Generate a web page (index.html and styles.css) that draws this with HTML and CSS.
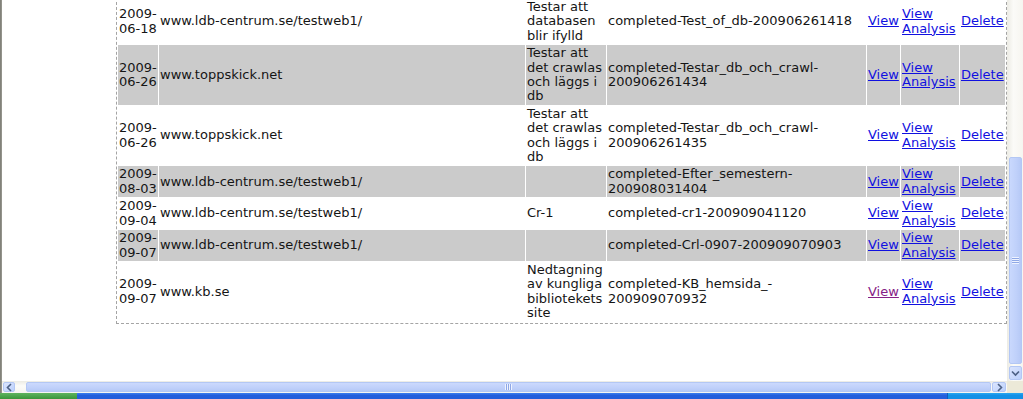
FILE: index.html
```html
<!DOCTYPE html>
<html lang="sv">
<head>
<meta charset="utf-8">
<title>Crawl jobs</title>
<link rel="stylesheet" href="styles.css">
</head>
<body>
<div class="screen">
  <div class="frame-left"></div>
  <div class="viewport">
    <div class="box">
      <table class="jobs">
        <colgroup>
          <col class="c-date"><col class="c-url"><col class="c-comment"><col class="c-file"><col class="c-view"><col class="c-analysis"><col class="c-delete">
        </colgroup>
        <tbody>
          <tr>
            <td>2009-<wbr>06-18</td><td>www.ldb-centrum.se/testweb1/</td><td>Testar att databasen blir ifylld</td><td>completed-Test_of_db-200906261418</td>
            <td><a href="#v1">View</a></td><td><a href="#a1">View Analysis</a></td><td><a href="#d1">Delete</a></td>
          </tr>
          <tr class="shade">
            <td>2009-<wbr>06-26</td><td>www.toppskick.net</td><td>Testar att det crawlas och läggs i db</td><td>completed-Testar_db_och_crawl-<wbr>200906261434</td>
            <td><a href="#v2">View</a></td><td><a href="#a2">View Analysis</a></td><td><a href="#d2">Delete</a></td>
          </tr>
          <tr>
            <td>2009-<wbr>06-26</td><td>www.toppskick.net</td><td>Testar att det crawlas och läggs i db</td><td>completed-Testar_db_och_crawl-<wbr>200906261435</td>
            <td><a href="#v3">View</a></td><td><a href="#a3">View Analysis</a></td><td><a href="#d3">Delete</a></td>
          </tr>
          <tr class="shade">
            <td>2009-<wbr>08-03</td><td>www.ldb-centrum.se/testweb1/</td><td></td><td>completed-Efter_semestern-<wbr>200908031404</td>
            <td><a href="#v4">View</a></td><td><a href="#a4">View Analysis</a></td><td><a href="#d4">Delete</a></td>
          </tr>
          <tr>
            <td>2009-<wbr>09-04</td><td>www.ldb-centrum.se/testweb1/</td><td>Cr-1</td><td>completed-cr1-200909041120</td>
            <td><a href="#v5">View</a></td><td><a href="#a5">View Analysis</a></td><td><a href="#d5">Delete</a></td>
          </tr>
          <tr class="shade">
            <td>2009-<wbr>09-07</td><td>www.ldb-centrum.se/testweb1/</td><td></td><td>completed-Crl-0907-200909070903</td>
            <td><a href="#v6">View</a></td><td><a href="#a6">View Analysis</a></td><td><a href="#d6">Delete</a></td>
          </tr>
          <tr>
            <td>2009-<wbr>09-07</td><td>www.kb.se</td><td>Nedtagning av kungliga bibliotekets site</td><td>completed-KB_hemsida_-<wbr>200909070932</td>
            <td><a class="visited" href="#v7">View</a></td><td><a href="#a7">View Analysis</a></td><td><a href="#d7">Delete</a></td>
          </tr>
        </tbody>
      </table>
    </div>
  </div>
  <div class="vscroll">
    <div class="vtrack">
      <div class="vthumb"><span class="grip-h"></span></div>
    </div>
    <div class="sbtn vbtn">
      <svg width="9" height="7" viewBox="0 0 9 7"><path d="M1 1.5 L4.5 5 L8 1.5" fill="none" stroke="#4d6185" stroke-width="1.6"/></svg>
    </div>
  </div>
  <div class="hscroll">
    <div class="sbtn hbtn-left">
      <svg width="7" height="9" viewBox="0 0 7 9"><path d="M5 1 L1.5 4.5 L5 8" fill="none" stroke="#4d6185" stroke-width="1.6"/></svg>
    </div>
    <div class="htrack">
      <div class="hthumb"><span class="grip-v"></span></div>
    </div>
    <div class="sbtn hbtn-right">
      <svg width="7" height="9" viewBox="0 0 7 9"><path d="M2 1 L5.5 4.5 L2 8" fill="none" stroke="#4d6185" stroke-width="1.6"/></svg>
    </div>
  </div>
  <div class="corner"></div>
  <div class="taskbar">
    <div class="start"></div>
    <div class="bar"></div>
    <div class="tray"></div>
  </div>
</div>
</body>
</html>
```

FILE: styles.css
```css
html, body {
  margin: 0;
  padding: 0;
  background: #ffffff;
  overflow: hidden;
}

.screen {
  width: 1023px;
  height: 399px;
  display: grid;
  grid-template-columns: 2px 1005px 16px;
  grid-template-rows: 381px 12px 6px;
}

.frame-left {
  grid-column: 1;
  grid-row: 1 / span 2;
  background: linear-gradient(to right, #7a7a72, #9b9b93);
}

.viewport {
  grid-column: 2;
  grid-row: 1;
  background: #ffffff;
  overflow: hidden;
  font-family: "DejaVu Sans", Verdana, sans-serif;
  font-size: 13px;
  color: #151515;
}

.box {
  margin: -3px 0 0 114px;
  width: 891px;
  box-sizing: border-box;
  border: 1px dashed #a4a4a4;
}

.jobs {
  width: 100%;
  table-layout: fixed;
  border-collapse: separate;
  border-spacing: 1px;
}

.c-date { width: 40px; }
.c-url { width: 366px; }
.c-comment { width: 80px; }
.c-file { width: 259px; }
.c-view { width: 33px; }
.c-analysis { width: 58px; }
.c-delete { width: 45px; }

.jobs td {
  padding: 1px;
  line-height: 14.4px;
  vertical-align: middle;
  text-align: left;
  overflow: hidden;
}

.jobs tr.shade td {
  background: #cbcbcb;
}

.jobs a {
  color: #1010e0;
  text-decoration: underline;
}

.jobs a.visited {
  color: #862086;
}

/* vertical scrollbar */
.vscroll {
  grid-column: 3;
  grid-row: 1;
  display: flex;
  flex-direction: column;
  background: linear-gradient(to right, #ecebe4, #fbfbf8 40%, #f6f5f0);
}

.vtrack {
  flex: 1;
  padding: 157px 1px 0 2px;
  box-sizing: border-box;
}

.vthumb {
  height: 207px;
  box-sizing: border-box;
  border: 1px solid #b3c7f4;
  border-radius: 2px;
  background: linear-gradient(to right, #c9d8fd, #bfd0fa 60%, #b6c9f6);
  display: flex;
  align-items: center;
  justify-content: center;
}

.grip-h {
  width: 7px;
  height: 7px;
  background: repeating-linear-gradient(to bottom, #eef3ff 0 1px, #8fa8e6 1px 2px);
}

.sbtn {
  box-sizing: border-box;
  border: 1px solid #b3c7f4;
  border-radius: 2px;
  background: linear-gradient(to bottom right, #dbe5fe, #bcd0fb);
  display: flex;
  align-items: center;
  justify-content: center;
}

.vbtn {
  height: 14px;
  margin: 1px 1px 1px 2px;
}

/* horizontal scrollbar */
.hscroll {
  grid-column: 2;
  grid-row: 2;
  display: flex;
  align-items: stretch;
  padding: 0 1px 0 1px;
  background: linear-gradient(to bottom, #ecebe4, #fbfbf8 40%, #f6f5f0);
}

.hbtn-left {
  width: 12px;
  margin: 1px 0;
}

.hbtn-right {
  width: 14px;
  margin: 1px 0;
}

.htrack {
  flex: 1;
  padding: 1px 1px 1px 11px;
  display: flex;
}

.hthumb {
  flex: 1;
  box-sizing: border-box;
  border: 1px solid #b3c7f4;
  border-radius: 2px;
  background: linear-gradient(to bottom, #cbd9fd, #bfd0fa 60%, #b6c9f6);
  display: flex;
  align-items: center;
  justify-content: center;
}

.grip-v {
  width: 7px;
  height: 6px;
  background: repeating-linear-gradient(to right, #eef3ff 0 1px, #8fa8e6 1px 2px);
}

.corner {
  grid-column: 3;
  grid-row: 2;
  background: #ece9d8;
}

/* taskbar strip */
.taskbar {
  grid-column: 1 / span 3;
  grid-row: 3;
  display: flex;
}

.start {
  width: 77px;
  background: linear-gradient(to bottom, #5fb45f, #3a953a);
}

.bar {
  flex: 1;
  background: linear-gradient(to bottom, #3d7ff0, #245edb 40%);
}

.tray {
  width: 75px;
  background: linear-gradient(to bottom, #29a8f2, #1290e6 40%);
  border-left: 1px solid #0c5bbd;
}
```
